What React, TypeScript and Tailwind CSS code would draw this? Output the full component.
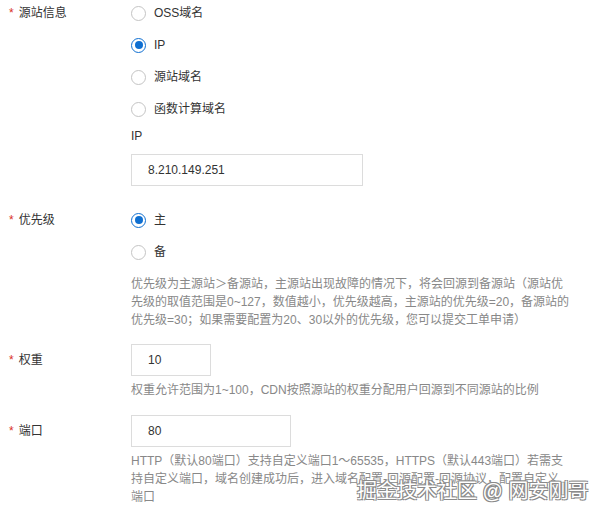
import { PropsWithChildren } from "react";
import clsx from "clsx";

const FONT = "font-['Liberation_Sans','Noto_Sans_CJK_SC',sans-serif]";

type RadioProps = {
  label: string;
  checked?: boolean;
};

const Radio = ({ label, checked = false }: RadioProps) => (
  <label className="flex h-5 items-center gap-2 text-[12px] text-[#333]">
    <span
      className={clsx(
        "flex h-[15px] w-[15px] items-center justify-center rounded-full bg-white",
        checked ? "border-[1.5px] border-[#0f6fd1]" : "border border-[#c4c4c4]"
      )}
    >
      {checked && <span className="h-[8px] w-[8px] rounded-full bg-[#0f6fd1]" />}
    </span>
    <span>{label}</span>
  </label>
);

type ItemProps = {
  label: string;
  lineHeight?: "radio" | "input";
  className?: string;
};

const FormItem = ({ label, lineHeight = "radio", className, children }: PropsWithChildren<ItemProps>) => (
  <div className={clsx("flex", className)}>
    <div
      className={clsx(
        "flex w-[131px] shrink-0 items-start pl-[9px] text-[12px] text-[#333]",
        lineHeight === "radio" ? "h-5 leading-5" : "h-8 leading-8"
      )}
    >
      <span className="mr-[5px] text-[#d93026]">*</span>
      {label}
    </div>
    <div className="flex flex-col">{children}</div>
  </div>
);

const Input = ({ value, width }: { value: string; width: string }) => (
  <div
    className={clsx(
      "flex h-8 items-center border border-[#dcdcdc] bg-white pl-4 text-[12px] text-[#333]",
      width
    )}
  >
    {value}
  </div>
);

const Help = ({ lines, className }: { lines: string[]; className?: string }) => (
  <div className={clsx("text-[12px] leading-[18px] text-[#888]", className)}>
    {lines.map((line) => (
      <div key={line} className="whitespace-nowrap">
        {line}
      </div>
    ))}
  </div>
);

export default function App() {
  return (
    <div className={clsx("relative h-[517px] w-[603px] overflow-hidden bg-white pt-[3px]", FONT)}>
      <FormItem label="源站信息">
        <div className="flex flex-col gap-3">
          <Radio label="OSS域名" />
          <Radio label="IP" checked />
          <Radio label="源站域名" />
          <Radio label="函数计算域名" />
        </div>
        <div className="mt-[7px] h-5 text-[12px] leading-5 text-[#333]">IP</div>
        <div className="mt-2">
          <Input value="8.210.149.251" width="w-[232px]" />
        </div>
      </FormItem>

      <FormItem label="优先级" className="mt-6">
        <div className="flex flex-col gap-3">
          <Radio label="主" checked />
          <Radio label="备" />
        </div>
        <Help
          className="mt-[13px]"
          lines={[
            "优先级为主源站＞备源站，主源站出现故障的情况下，将会回源到备源站（源站优",
            "先级的取值范围是0~127，数值越小，优先级越高，主源站的优先级=20，备源站的",
            "优先级=30；如果需要配置为20、30以外的优先级，您可以提交工单申请）",
          ]}
        />
      </FormItem>

      <FormItem label="权重" lineHeight="input" className="mt-[15px]">
        <Input value="10" width="w-[80px]" />
        <Help
          className="mt-[5px]"
          lines={["权重允许范围为1~100，CDN按照源站的权重分配用户回源到不同源站的比例"]}
        />
      </FormItem>

      <FormItem label="端口" lineHeight="input" className="mt-4">
        <Input value="80" width="w-[160px]" />
        <Help
          className="mt-[5px]"
          lines={[
            "HTTP（默认80端口）支持自定义端口1～65535，HTTPS（默认443端口）若需支",
            "持自定义端口，域名创建成功后，进入域名配置-回源配置-回源协议，配置自定义",
            "端口",
          ]}
        />
      </FormItem>

      {/* watermark overlay */}
      <div className="absolute left-[357px] top-[479px] whitespace-nowrap text-[20px] leading-6 text-white [text-shadow:1px_1px_0_#8a8a8a,-1px_-1px_0_#8a8a8a,1px_-1px_0_#8a8a8a,-1px_1px_0_#8a8a8a]">
        掘金技术社区 @ 网安刚哥
      </div>
    </div>
  );
}
